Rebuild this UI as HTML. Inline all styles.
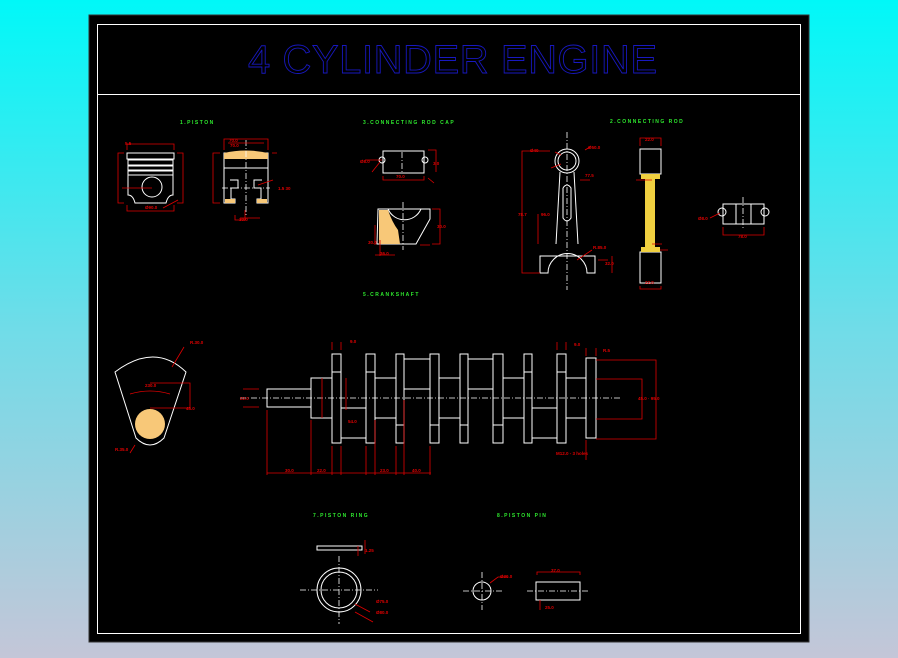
<!DOCTYPE html>
<html><head><meta charset="utf-8"><style>
html,body{margin:0;padding:0;width:898px;height:658px;overflow:hidden}
svg{display:block}
text{font-family:"Liberation Sans",sans-serif}
</style></head><body>
<svg width="898" height="658" viewBox="0 0 898 658" xmlns="http://www.w3.org/2000/svg">
<defs><linearGradient id="bg" x1="0" y1="0" x2="0" y2="1">
<stop offset="0" stop-color="#00f8f8"/><stop offset="0.5" stop-color="#70dce8"/><stop offset="1" stop-color="#c4c6d8"/></linearGradient></defs>
<rect width="898" height="658" fill="url(#bg)"/>
<rect x="89" y="15" width="720" height="627" fill="#000" stroke="#333" stroke-width="1"/>
<rect x="97.5" y="24.5" width="703" height="609" fill="none" stroke="#fff" stroke-width="1"/>
<line x1="97" y1="94.5" x2="800" y2="94.5" stroke="#fff"/>
<text x="248" y="73" font-size="40" fill="none" stroke="#1818c0" stroke-width="0.9" textLength="409" lengthAdjust="spacing">4 CYLINDER ENGINE</text>

<g fill="#2ee82e" font-size="5" font-weight="bold" letter-spacing="1.5">
<text x="180" y="124">1.PISTON</text>
<text x="363" y="124">3.CONNECTING ROD CAP</text>
<text x="610" y="123">2.CONNECTING ROD</text>
<text x="363" y="296">5.CRANKSHAFT</text>
<text x="313" y="517">7.PISTON RING</text>
<text x="497" y="517">8.PISTON PIN</text>
</g>

<g fill="none" stroke="#fff" stroke-width="1">
<path d="M127 153h47v6h-47zM128 160h45v5h-45zM128 166h45v4h-45zM128 171h45v4h-45z"/>
<path d="M128 175v20q5 0 7 8h31q2-8 7-8v-20"/>
<circle cx="152" cy="187" r="10"/>
<path d="M224 153h44v15h-44zM224 168v35h11v-4h-4v-11h7v-8h-8M268 168v35h-11v-4h4v-11h-7v-8h8"/>
<rect x="383" y="151" width="41" height="22"/><circle cx="382" cy="160" r="3"/><circle cx="425" cy="160" r="3"/>
<path d="M378 209h52v10l-14 25h-39zM388 209a18 18 0 0 0 33 0"/>
<circle cx="567" cy="161" r="12"/><circle cx="567" cy="161" r="9"/>
<path d="M560 172l-4 72M574 172l4 72M563 188v30q4 6 8 0v-30q-4-6-8 0"/>
<path d="M540 273v-17h55v17h-8a19 19 0 0 0-39 0z"/>
<rect x="640" y="149" width="21" height="25"/><rect x="640" y="252" width="21" height="31"/>
<rect x="723" y="204" width="41" height="20"/><circle cx="722" cy="212" r="4"/><circle cx="765" cy="212" r="4"/><line x1="736" y1="204" x2="736" y2="224"/><line x1="751" y1="204" x2="751" y2="224"/>
<path d="M115 372q40-30 71 0l-22 66q-14 14-28 0z"/>
<rect x="267" y="389" width="44" height="18"/><rect x="311" y="378" width="21" height="40"/>
<g>
<rect x="332" y="354" width="9" height="89"/><rect x="366" y="354" width="9" height="89"/><rect x="396" y="354" width="8" height="89"/><rect x="430" y="354" width="9" height="89"/><rect x="460" y="354" width="8" height="89"/><rect x="493" y="354" width="10" height="89"/><rect x="524" y="354" width="8" height="89"/><rect x="557" y="354" width="9" height="89"/><rect x="586" y="358" width="10" height="80"/>
<rect x="341" y="408" width="25" height="30"/><rect x="375" y="378" width="21" height="40"/><rect x="404" y="359" width="26" height="30"/><rect x="439" y="378" width="21" height="40"/><rect x="468" y="359" width="25" height="30"/><rect x="503" y="378" width="21" height="40"/><rect x="532" y="408" width="25" height="30"/><rect x="566" y="378" width="20" height="40"/>
<line x1="332" y1="372" x2="341" y2="372"/><line x1="366" y1="372" x2="375" y2="372"/><line x1="396" y1="425" x2="404" y2="425"/><line x1="430" y1="425" x2="439" y2="425"/><line x1="460" y1="425" x2="468" y2="425"/><line x1="493" y1="425" x2="503" y2="425"/><line x1="524" y1="372" x2="532" y2="372"/><line x1="557" y1="372" x2="566" y2="372"/>
</g>
<rect x="317" y="546" width="45" height="4"/>
<circle cx="339" cy="590" r="22"/><circle cx="339" cy="590" r="18"/>
<circle cx="482" cy="591" r="9"/><rect x="536" y="582" width="44" height="18"/>
</g>
<g fill="#f8c878">
<path d="M224 153q22-5 44 0v6h-44z"/><rect x="225" y="199" width="10" height="4"/><rect x="257" y="199" width="10" height="4"/>
<path d="M379 210h9q4 12 10 20l2 14h-21z"/>
<path d="M645 174h10v78h-10z" fill="#f0d040"/><rect x="641" y="174" width="19" height="5" fill="#f0d040"/><rect x="641" y="247" width="19" height="5" fill="#f0d040"/>
<circle cx="150" cy="424" r="15"/>
</g>
<g stroke="#fff" stroke-width="0.8" stroke-dasharray="6 2 1 2" fill="none">
<line x1="240" y1="398" x2="620" y2="398"/><line x1="567" y1="132" x2="567" y2="290"/><line x1="246" y1="140" x2="246" y2="215"/>
<line x1="300" y1="590" x2="378" y2="590"/><line x1="339" y1="556" x2="339" y2="624"/><line x1="463" y1="591" x2="502" y2="591"/><line x1="482" y1="572" x2="482" y2="610"/><line x1="527" y1="591" x2="590" y2="591"/>
<line x1="402" y1="152" x2="402" y2="172"/><line x1="403" y1="202" x2="403" y2="250"/><line x1="743" y1="197" x2="743" y2="230"/><line x1="222" y1="188" x2="270" y2="188"/>
</g>
<g stroke="#e00000" stroke-width="0.8" fill="none">
<path d="M127 150v-6h47v6M124 153h-6v50h6M177 153h6v50h-6M127 205v6h47v-6M122 188h30M178 200l-15 8"/>
<path d="M224 150v-11h44v11M228 143h36M220 153h-7v50h7M272 153h5M245 210v10h-10v-5M240 218h20M258 185l15-5"/>
<path d="M383 176v4h41v-4M365 160h17M428 150h8v22M428 178l6 5M372 172l8-10"/>
<path d="M432 209h8v35h-8M375 225v20M375 255h20M380 240v16M420 245l10 0"/>
<path d="M550 151h-28v122h18M538 214v30M551 168l10-4M555 152l6 3M585 150l5-3M580 180h10M592 250l-15 10M598 260h10M612 256v17"/>
<path d="M640 146v-8h21v8M640 286v3h21v-3M652 180h-16M652 244h10M660 250h8"/>
<path d="M723 227v8h41v-8M710 218l10-5"/>
<path d="M172 367l12-20M130 394q20-6 40 0M150 408h40v-25h-40M135 445l-5 8"/>
<path d="M259 389h-16M259 407h-16M267 410v65M311 420v55M332 446v29M341 446v29M366 446v29M375 420v55M396 446v29M404 400v75M430 446v29M267 473h164M346 378v32M322 378v40M332 350v-8M341 350v-8"/>
<path d="M586 356v-8M596 356v-8M557 350v-8M566 350v-8M596 360h60v79h-60M596 379h46v40h-46M586 440v20"/>
<path d="M358 546v10M365 540v14M355 604l15 8M355 612l18 10M490 583l8-6h10M537 575v-3h43v3M540 600v10"/>
</g>
<g fill="#e00000" font-size="4.5" font-weight="bold">
<text x="145" y="209">Ø90.0</text><text x="125" y="145">5.5</text><text x="229" y="142">70.0</text><text x="230" y="147">70.0</text><text x="278" y="190">1.5 30</text><text x="239" y="221">30.0</text>
<text x="360" y="163">Ø8.0</text><text x="396" y="178">70.0</text><text x="433" y="165">3.0</text><text x="368" y="244">30.0</text><text x="437" y="228">30.0</text><text x="380" y="255">36.0</text>
<text x="530" y="152">Ø40</text><text x="588" y="149">Ø50.0</text><text x="518" y="216">78.7</text><text x="541" y="216">96.0</text><text x="585" y="177">77.5</text><text x="593" y="249">R.85.0</text><text x="605" y="265">32.0</text>
<text x="645" y="141">22.0</text><text x="645" y="284">22.0</text><text x="698" y="220">Ø8.0</text><text x="738" y="238">78.0</text>
<text x="190" y="344">R.30.0</text><text x="145" y="387">230.0</text><text x="186" y="410">45.0</text><text x="115" y="451">R.35.0</text>
<text x="240" y="400">22.0</text><text x="285" y="472">30.0</text><text x="317" y="472">22.0</text><text x="348" y="423">54.0</text><text x="380" y="472">23.0</text><text x="412" y="472">40.0</text><text x="350" y="343">9.0</text><text x="574" y="346">9.0</text><text x="603" y="352">R.5</text><text x="638" y="400">45.0 · 95.0</text><text x="556" y="455">M12.0 - 3 holes</text>
<text x="365" y="552">1.25</text><text x="376" y="603">Ø75.0</text><text x="376" y="614">Ø80.0</text><text x="500" y="578">Ø30.0</text><text x="551" y="572">37.0</text><text x="545" y="609">25.0</text>
</g>
</svg>
</body></html>
